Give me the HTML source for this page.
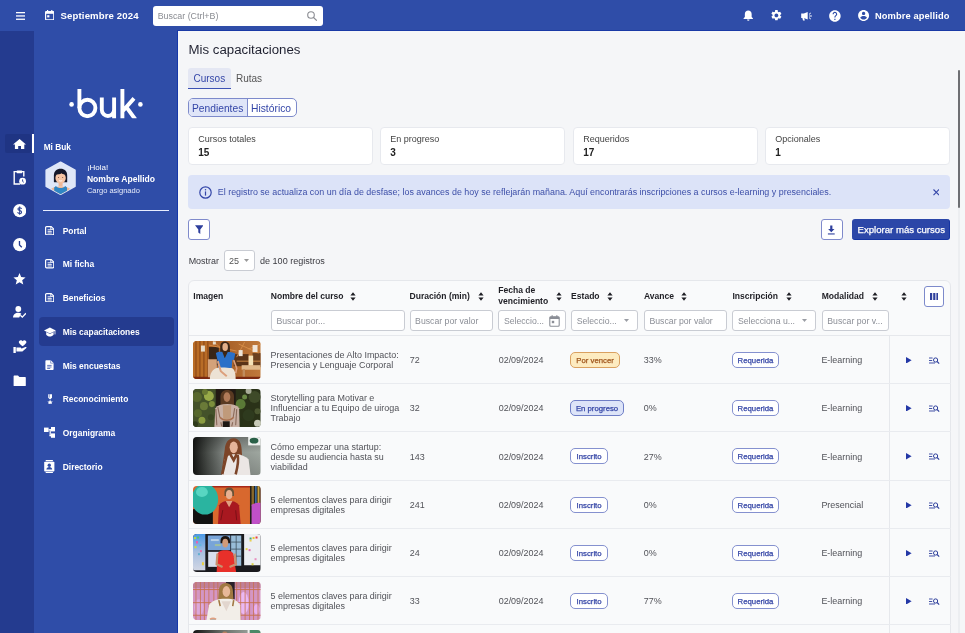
<!DOCTYPE html>
<html><head><meta charset="utf-8">
<style>
*{box-sizing:border-box;margin:0;padding:0}
html,body{width:965px;height:633px;overflow:hidden;background:#f5f6f8;font-family:"Liberation Sans",sans-serif;color:#222}
.a{position:absolute}
.t{position:absolute;white-space:nowrap;line-height:1}
#hdr{left:0;top:0;width:965px;height:31px;background:#2f4da8}
#hdrline{left:177px;top:30px;width:788px;height:1px;background:#1a3aa6}
#rail{left:0;top:31px;width:34px;height:602px;background:#243b8f}
#side{left:34px;top:31px;width:143px;height:602px;background:#2f4da8}
#sideline{left:177px;top:30px;width:1px;height:603px;background:#1537a8}
.wt{color:#fff}
.navi{position:absolute;left:38.8px;width:134.8px;height:29.2px;border-radius:4px}
.navt{position:absolute;left:62.7px;color:#fff;font-weight:700;font-size:8.45px;white-space:nowrap;line-height:1;margin-top:0.6px}
.card{position:absolute;top:127px;height:38px;width:185px;background:#fff;border:1px solid #e7e9ee;border-radius:4px}
.cl{position:absolute;left:9.2px;top:7.4px;font-size:9px;color:#444;white-space:nowrap;line-height:1}
.cv{position:absolute;left:9.2px;top:19.6px;font-size:10px;font-weight:700;color:#222;white-space:nowrap;line-height:1}
.inp{position:absolute;top:310px;height:21px;background:#fff;border:1px solid #c9ccd3;border-radius:3px}
.ph{position:absolute;left:4.6px;top:6px;font-size:8.7px;color:#8b8e96;white-space:nowrap;line-height:1}
.th{position:absolute;font-size:8.55px;font-weight:700;color:#1e1e24;white-space:nowrap;line-height:1}
.sort{position:absolute;width:6px;height:9px}
.rowsep{position:absolute;left:189px;width:761.5px;height:1px;background:#e9ebef}
.td{position:absolute;font-size:8.95px;color:#515258;white-space:nowrap;line-height:10px;margin-top:1px}
.bdg{position:absolute;height:15.8px;border-radius:5px;border:1px solid #8591cf;background:#fff;color:#3445a6;font-size:7.75px;font-weight:400;-webkit-text-stroke:0.25px currentColor;line-height:15.8px;text-align:center;white-space:nowrap}
.thumb{position:absolute;left:193.1px;width:67.5px;height:38.3px;border-radius:4px;overflow:hidden}
</style></head><body><div id="wrap" style="position:absolute;left:0;top:0;width:965px;height:633px;overflow:hidden;will-change:transform">
<div id="hdr" class="a"></div>
<div id="rail" class="a"></div>
<div id="side" class="a"></div>
<div id="sideline" class="a"></div>
<div id="hdrline" class="a"></div>

<!-- header content -->
<svg class="a" style="left:16px;top:12px" width="9" height="8" viewBox="0 0 9 8"><rect x="0" y="0" width="9" height="1.3" fill="#fff"/><rect x="0" y="3.3" width="9" height="1.3" fill="#fff"/><rect x="0" y="6.6" width="9" height="1.3" fill="#fff"/></svg>
<svg class="a" style="left:44.8px;top:9.8px" width="9.4" height="10.4" viewBox="0 0 9.4 10.4"><rect x="0.6" y="1.6" width="8.2" height="8.2" rx="0.8" fill="none" stroke="#fff" stroke-width="1.2"/><rect x="0.6" y="1.6" width="8.2" height="2.2" fill="#fff"/><rect x="2" y="0" width="1.2" height="2.4" fill="#fff"/><rect x="6.2" y="0" width="1.2" height="2.4" fill="#fff"/><rect x="2.2" y="5.2" width="2.2" height="2.2" fill="#fff"/></svg>
<div class="t wt" style="left:60.6px;top:10.7px;font-size:9.6px;font-weight:700;letter-spacing:0.12px">Septiembre 2024</div>
<div class="a" style="left:153px;top:6px;width:170px;height:19.5px;background:#fff;border-radius:3px"></div>
<div class="t" style="left:157.7px;top:12.2px;font-size:8.85px;color:#8a8c92">Buscar (Ctrl+B)</div>
<svg class="a" style="left:306.9px;top:10.7px" width="10.5" height="10" viewBox="0 0 10.5 10"><circle cx="4" cy="4" r="3.3" fill="none" stroke="#8a8c92" stroke-width="1.1"/><line x1="6.4" y1="6.4" x2="9.8" y2="9.6" stroke="#8a8c92" stroke-width="1.2"/></svg>

<!-- header right icons -->
<svg class="a" style="left:742.7px;top:10px" width="10.5" height="11" viewBox="0 0 10.5 11"><path d="M5.25 0.6c-2 0-3.4 1.5-3.4 3.5v2.8L0.6 8.3v0.6h9.3V8.3L8.65 6.9V4.1c0-2-1.4-3.5-3.4-3.5z" fill="#fff"/><path d="M4 9.6h2.5a1.25 1.25 0 0 1-2.5 0z" fill="#fff"/></svg>
<svg class="a" style="left:770.2px;top:9.2px" width="12.8" height="12.8" viewBox="0 0 24 24"><path fill="#fff" d="M19.14 12.94c.04-.3.06-.61.06-.94s-.02-.64-.07-.94l2.03-1.58a.49.49 0 0 0 .12-.61l-1.92-3.32a.49.49 0 0 0-.59-.22l-2.39.96c-.5-.38-1.03-.7-1.62-.94l-.36-2.54A.48.48 0 0 0 13.92 2h-3.84c-.24 0-.43.17-.47.41l-.36 2.54c-.59.24-1.13.57-1.62.94l-2.39-.96a.48.48 0 0 0-.59.22L2.74 8.47c-.12.21-.08.47.12.61l2.03 1.58c-.05.3-.09.63-.09.94s.02.64.07.94l-2.03 1.58a.49.49 0 0 0-.12.61l1.92 3.32c.12.22.37.29.59.22l2.39-.96c.5.38 1.03.7 1.62.94l.36 2.54c.05.24.24.41.48.41h3.84c.24 0 .44-.17.47-.41l.36-2.54c.59-.24 1.13-.56 1.62-.94l2.39.96c.22.08.47 0 .59-.22l1.92-3.32c.12-.22.07-.47-.12-.61l-2.01-1.58zM12 15.6c-1.98 0-3.6-1.62-3.6-3.6s1.62-3.6 3.6-3.6 3.6 1.62 3.6 3.6-1.62 3.6-3.6 3.6z"/></svg>
<svg class="a" style="left:800.7px;top:10px" width="11.5" height="11" viewBox="0 0 11.5 11"><path d="M0.2 3.6h2.6L6.7 2v7.6L2.8 8H0.2z" fill="#fff"/><path d="M1.4 8h1.8l0.6 2.4H2z" fill="#fff"/><path d="M8 4.4L9.8 3M8.1 6h2.8M8 7.6L9.8 9" stroke="#fff" stroke-width="1"/></svg>
<svg class="a" style="left:828.05px;top:8.9px" width="13.8" height="13.8" viewBox="0 0 24 24"><path fill="#fff" d="M12 2C6.48 2 2 6.48 2 12s4.48 10 10 10 10-4.48 10-10S17.52 2 12 2zm1 17h-2v-2h2v2zm2.07-7.75-.9.92C13.45 12.9 13 13.5 13 15h-2v-.5c0-1.1.45-2.1 1.17-2.83l1.24-1.26c.37-.36.59-.86.59-1.41 0-1.1-.9-2-2-2s-2 .9-2 2H8c0-2.21 1.79-4 4-4s4 1.79 4 4c0 .88-.36 1.68-.93 2.25z"/></svg>
<svg class="a" style="left:857.2px;top:9.2px" width="13.2" height="13.2" viewBox="0 0 24 24"><path fill="#fff" d="M12 2C6.48 2 2 6.48 2 12s4.48 10 10 10 10-4.48 10-10S17.52 2 12 2zm0 3c1.66 0 3 1.34 3 3s-1.34 3-3 3-3-1.34-3-3 1.34-3 3-3zm0 14.2c-2.5 0-4.71-1.28-6-3.22.03-1.99 4-3.08 6-3.08 1.99 0 5.97 1.09 6 3.08-1.29 1.94-3.5 3.22-6 3.22z"/></svg>
<div class="t wt" style="left:874.9px;top:11.5px;font-size:9.3px;font-weight:700;letter-spacing:0.12px">Nombre apellido</div>

<!-- rail -->
<div class="a" style="left:5.3px;top:133.8px;width:25.7px;height:18.8px;background:#1f3483;border-radius:2px"></div>
<div class="a" style="left:32px;top:134px;width:1.8px;height:19.3px;background:#fff"></div>
<svg class="a" style="left:12.8px;top:138.7px" width="13.2" height="10.2" viewBox="0 0 13.2 10.2"><path d="M6.6 0L0 5.6h1.9v4.6h3.3V7h2.8v3.2h3.3V5.6h1.9z" fill="#fff"/></svg>
<svg class="a" style="left:12.5px;top:170px" width="13" height="15" viewBox="0 0 13 15"><path d="M4 1.6H1.2v12.4h6" fill="none" stroke="#fff" stroke-width="1.4"/><path d="M9 1.6h1.8v5" fill="none" stroke="#fff" stroke-width="1.4"/><rect x="3.6" y="0.6" width="5.6" height="2.6" rx="0.6" fill="#fff"/><circle cx="9.6" cy="11.2" r="3.4" fill="#fff"/><path d="M9.6 9.4v2l1.2 0.9" fill="none" stroke="#243b8f" stroke-width="0.9"/></svg>
<svg class="a" style="left:12.7px;top:204.2px" width="13.4" height="13.4" viewBox="0 0 24 24"><circle cx="12" cy="12" r="11.8" fill="#fff"/><path d="M15.4 8.8c-.3-1.3-1.5-2.2-3.4-2.2-1.9 0-3.2 1-3.2 2.5 0 3.5 6.6 1.9 6.6 5.5 0 1.6-1.4 2.6-3.4 2.6-2.1 0-3.4-1-3.7-2.5M12 4.6v14.8" fill="none" stroke="#243b8f" stroke-width="1.8"/></svg>
<svg class="a" style="left:12.7px;top:238.3px" width="13.4" height="13.4" viewBox="0 0 24 24"><circle cx="12" cy="12" r="11.8" fill="#fff"/><path d="M11.6 5.5V12.4l4.2 4" fill="none" stroke="#243b8f" stroke-width="2.4"/></svg>
<svg class="a" style="left:13px;top:273px" width="13" height="12.4" viewBox="0 0 24 23"><path d="M12 0l3.1 7.6 8.2.6-6.3 5.3 2 8L12 17.1l-7 4.4 2-8L.7 8.2l8.2-.6z" fill="#fff"/></svg>
<svg class="a" style="left:12.8px;top:306px" width="13.4" height="12" viewBox="0 0 13.4 12"><circle cx="5.3" cy="3" r="2.9" fill="#fff"/><path d="M0 11.6c0-3 2.4-4.8 5.3-4.8 1.2 0 2.2.3 3 .8L6.2 11.6z" fill="#fff"/><path d="M7.4 9.2l1.9 1.9 3.6-3.8" fill="none" stroke="#fff" stroke-width="1.3"/></svg>
<svg class="a" style="left:12.5px;top:339.6px" width="14" height="13.2" viewBox="0 0 14 13.2"><path d="M9.6 1.2c.6-.8 2.3-1.4 3.3-.3 1.2 1.3.2 2.9-3.3 5.4-3.5-2.5-4.5-4.1-3.3-5.4 1-1.1 2.7-.5 3.3.3z" fill="#fff"/><rect x="0.4" y="7" width="2.4" height="6" fill="#fff"/><path d="M3.4 7.4h3.8c.8 0 1.2.6 1.2 1.2H5.6h3.2l3.6-1.6c.8-.3 1.4.4 1 1l-4 3.6H3.4z" fill="#fff"/></svg>
<svg class="a" style="left:12.6px;top:374.5px" width="13.4" height="11" viewBox="0 0 13.4 11"><path d="M0.6 1.2c0-.4.3-.6.6-.6h3.8l1.4 1.5h5.8c.4 0 .6.3.6.6v7.7c0 .4-.3.6-.6.6H1.2c-.4 0-.6-.3-.6-.6z" fill="#fff"/></svg>

<!-- logo -->
<svg class="a" style="left:60px;top:80px" width="90" height="45" viewBox="60 80 90 45">
<defs><clipPath id="lc"><rect x="60" y="80" width="90" height="38.2"/></clipPath></defs>
<circle cx="71.6" cy="104.4" r="2.3" fill="#fff"/>
<circle cx="140.4" cy="104.4" r="2.3" fill="#fff"/>
<g fill="none" stroke="#fff" stroke-width="3.9" clip-path="url(#lc)">
<path d="M79.4 89V108"/>
<ellipse cx="87.4" cy="108" rx="8" ry="8.2"/>
<path d="M101.8 97.4V109.8A6.15 6.15 0 0 0 114.1 109.8M114.1 97.4V119"/>
<path d="M122.4 89V119M122.6 111.2L134 98.4M126.6 107.4L135.4 119.5"/>
</g></svg>

<div class="t wt" style="left:43.7px;top:143.2px;font-size:8.3px;font-weight:700">Mi Buk</div>
<svg class="a" style="left:45px;top:161.3px" width="31.2" height="34.5" viewBox="0 0 31.2 34.5">
<defs><clipPath id="hx"><path d="M15.6 1.2L30 9.3V25.2L15.6 33.3L1.2 25.2V9.3z" stroke-linejoin="round"/></clipPath></defs>
<path d="M15.6 1.2L30 9.3V25.2L15.6 33.3L1.2 25.2V9.3z" fill="#dfe7f8" stroke="#dfe7f8" stroke-width="1.6" stroke-linejoin="round"/>
<g clip-path="url(#hx)">
<path d="M8.9 14.5c0-4.6 2.8-6.8 6.7-6.8s6.6 2.2 6.6 6.8v6.7H8.9z" fill="#14182a"/>
<ellipse cx="15.6" cy="17" rx="5.2" ry="5.8" fill="#f5c4a4"/>
<path d="M9.8 13.6c0.8-3.6 3-4.8 5.8-4.8s5 1.2 5.8 4.8c-1.6 0-3.6-0.4-5-1.4-1.2 1-3.4 1.4-6.6 1.4z" fill="#14182a"/>
<circle cx="13.5" cy="16.4" r="0.5" fill="#6a4a3a"/><circle cx="17.7" cy="16.4" r="0.5" fill="#6a4a3a"/>
<path d="M14 19.4c0.9 0.8 2.3 0.8 3.2 0" stroke="#fff" stroke-width="0.9" fill="none"/>
<rect x="13.6" y="21.5" width="4" height="4" fill="#f0b896"/>
<path d="M3.5 34.5c0-5.4 3-9 12.1-9s12.1 3.6 12.1 9z" fill="#f0b896"/>
<path d="M9.2 34.5V26.5l1.8-1.6c1 1.4 2.6 2.2 4.6 2.2s3.6-0.8 4.6-2.2l1.8 1.6v8z" fill="#2f86c4"/>
</g></svg>
<div class="t wt" style="left:86.9px;top:163.6px;font-size:8px">¡Hola!</div>
<div class="t wt" style="left:86.9px;top:175px;font-size:8.55px;font-weight:700">Nombre Apellido</div>
<div class="t wt" style="left:86.9px;top:186.5px;font-size:7.5px;color:#e6ebfa">Cargo asignado</div>
<div class="a" style="left:43px;top:210px;width:126.4px;height:1.2px;background:#e8edff"></div>

<!-- nav -->
<div class="navi" style="top:317.3px;background:#243b8f"></div>
<svg class="a" style="left:44.9px;top:225.8px" width="9.4" height="9.4" viewBox="0 0 9.4 9.4"><path d="M1.6 0.6h4.6l2.6 2.6v4.6c0 .6-.4 1-1 1H1.6c-.6 0-1-.4-1-1V1.6c0-.6.4-1 1-1z" fill="none" stroke="#fff" stroke-width="1.2"/><path d="M2.6 3.8h3.4M2.6 5.4h4.2M2.6 7h4.2" stroke="#fff" stroke-width="0.9"/><path d="M5.8 0.6v2.8h3" fill="none" stroke="#fff" stroke-width="0.9"/></svg>
<div class="navt" style="top:226.4px">Portal</div>
<svg class="a" style="left:44.9px;top:259.3px" width="9.4" height="9.4" viewBox="0 0 9.4 9.4"><path d="M1.6 0.6h4.6l2.6 2.6v4.6c0 .6-.4 1-1 1H1.6c-.6 0-1-.4-1-1V1.6c0-.6.4-1 1-1z" fill="none" stroke="#fff" stroke-width="1.2"/><path d="M2.6 3.8h3.4M2.6 5.4h4.2M2.6 7h4.2" stroke="#fff" stroke-width="0.9"/><path d="M5.8 0.6v2.8h3" fill="none" stroke="#fff" stroke-width="0.9"/></svg>
<div class="navt" style="top:259.9px">Mi ficha</div>
<svg class="a" style="left:44.9px;top:293.0px" width="9.4" height="9.4" viewBox="0 0 9.4 9.4"><path d="M1.6 0.6h4.6l2.6 2.6v4.6c0 .6-.4 1-1 1H1.6c-.6 0-1-.4-1-1V1.6c0-.6.4-1 1-1z" fill="none" stroke="#fff" stroke-width="1.2"/><path d="M2.6 3.8h3.4M2.6 5.4h4.2M2.6 7h4.2" stroke="#fff" stroke-width="0.9"/><path d="M5.8 0.6v2.8h3" fill="none" stroke="#fff" stroke-width="0.9"/></svg>
<div class="navt" style="top:293.6px">Beneficios</div>
<svg class="a" style="left:43.9px;top:326.5px" width="11.8" height="10" viewBox="0 0 11.8 10"><path d="M5.9 0.6L0 3.6l5.9 3 5.9-3z" fill="#fff"/><path d="M2.2 5v2.8c1 1.2 2.2 1.8 3.7 1.8s2.7-.6 3.7-1.8V5L5.9 6.9z" fill="#fff"/><path d="M11 3.8v3.6" stroke="#fff" stroke-width="0.8"/></svg>
<div class="navt" style="top:327.4px">Mis capacitaciones</div>
<svg class="a" style="left:45.2px;top:360.1px" width="8.8" height="10.2" viewBox="0 0 8.8 10.2"><path d="M1.2 0.2h4.6L8.6 3v6.2c0 .5-.3.8-.8.8H1.2c-.5 0-.8-.3-.8-.8V1c0-.5.3-.8.8-.8z" fill="#fff"/><path d="M2.2 5.4h4.4M2.2 7h4.4M2.2 8.5h3" stroke="#2f4da8" stroke-width="0.75"/><path d="M5.6 0.2v3h3" fill="none" stroke="#2f4da8" stroke-width="0.5"/></svg>
<div class="navt" style="top:361.1px">Mis encuestas</div>
<svg class="a" style="left:46.6px;top:393.8px" width="6.2" height="10.4" viewBox="0 0 6.2 10.4"><path d="M1.2 0.2h3.8v3.6L3.1 5.4 1.2 3.8z" fill="#fff"/><path d="M2.4 0.2v3.4" stroke="#2f4da8" stroke-width="0.5"/><path d="M3.1 5.8l0.9 1.6 1.8.2-1.3 1.2.4 1.7-1.8-.9-1.8.9.4-1.7L.4 7.6l1.8-.2z" fill="#fff"/></svg>
<div class="navt" style="top:394.9px">Reconocimiento</div>
<svg class="a" style="left:43.7px;top:427.1px" width="11.8" height="10.9" viewBox="0 0 11.8 10.9"><rect x="0" y="0.6" width="4.6" height="4.4" fill="#fff"/><rect x="4.6" y="2.2" width="2.4" height="1.2" fill="#fff"/><rect x="5.6" y="2.2" width="1.2" height="7" fill="#fff"/><rect x="7" y="0" width="4.8" height="4.4" fill="#fff"/><rect x="7" y="6.4" width="4.8" height="4.4" fill="#fff"/><rect x="5.6" y="8" width="1.6" height="1.2" fill="#fff"/></svg>
<div class="navt" style="top:428.4px">Organigrama</div>
<svg class="a" style="left:44.2px;top:459.7px" width="10.6" height="13.3" viewBox="0 0 10.6 13.3"><rect x="1.6" y="0" width="7.4" height="1.2" rx="0.4" fill="#fff"/><rect x="1.6" y="12.1" width="7.4" height="1.2" rx="0.4" fill="#fff"/><rect x="0.2" y="1.8" width="10.2" height="9.7" rx="0.8" fill="#fff"/><circle cx="5.3" cy="5.2" r="1.7" fill="#2f4da8"/><path d="M2.4 9.6c0-1.8 1.3-2.7 2.9-2.7s2.9.9 2.9 2.7z" fill="#2f4da8"/></svg>
<div class="navt" style="top:462.2px">Directorio</div>
<!-- title & tabs -->
<div class="t" style="left:188.5px;top:42.8px;font-size:13.26px;color:#1f2130">Mis capacitaciones</div>
<div class="a" style="left:188.2px;top:67.7px;width:42.8px;height:21.3px;background:#e4e7f3;border-radius:3px 3px 0 0"></div>
<div class="a" style="left:188.2px;top:87.6px;width:42.8px;height:1.4px;background:#3d52b4"></div>
<div class="t" style="left:193.5px;top:74.2px;font-size:10px;color:#3446a8">Cursos</div>
<div class="t" style="left:236px;top:74.2px;font-size:10px;color:#555">Rutas</div>
<div class="a" style="left:188.2px;top:98.3px;width:108.4px;height:19.2px;border:1px solid #7d8acb;border-radius:5px;background:#fff;overflow:hidden"><div class="a" style="left:0;top:0;width:58.4px;height:100%;background:#dfe5f8;border-right:1px solid #7d8acb"></div></div>
<div class="t" style="left:192px;top:103.9px;font-size:10.25px;color:#3446a8">Pendientes</div>
<div class="t" style="left:251px;top:103.9px;font-size:10.3px;color:#3446a8">Histórico</div>

<!-- stat cards -->
<div class="card" style="left:188px"><div class="cl">Cursos totales</div><div class="cv">15</div></div>
<div class="card" style="left:380px"><div class="cl">En progreso</div><div class="cv">3</div></div>
<div class="card" style="left:573px"><div class="cl">Requeridos</div><div class="cv">17</div></div>
<div class="card" style="left:765px"><div class="cl">Opcionales</div><div class="cv">1</div></div>

<!-- alert -->
<div class="a" style="left:188.2px;top:175.4px;width:761.8px;height:33.4px;background:#dce3f8;border-radius:4px"></div>
<svg class="a" style="left:198.7px;top:186px" width="13" height="13" viewBox="0 0 13 13"><circle cx="6.5" cy="6.5" r="5.7" fill="none" stroke="#3446a8" stroke-width="1.2"/><rect x="5.9" y="5.4" width="1.2" height="4.2" fill="#3446a8"/><circle cx="6.5" cy="3.7" r="0.75" fill="#3446a8"/></svg>
<div class="t" style="left:217.8px;top:188px;font-size:8.91px;color:#3d4fa8">El registro se actualiza con un día de desfase; los avances de hoy se reflejarán mañana. Aquí encontrarás inscripciones a cursos e-learning y presenciales.</div>
<svg class="a" style="left:932.8px;top:189.3px" width="6.6" height="6.6" viewBox="0 0 6.6 6.6"><path d="M0.5 0.5L6.1 6.1M6.1 0.5L0.5 6.1" stroke="#3446a8" stroke-width="1.1"/></svg>

<!-- toolbar -->
<div class="a" style="left:188.2px;top:219px;width:21.7px;height:21.4px;border:1px solid #7f8acb;border-radius:3px;background:#fff"></div>
<svg class="a" style="left:194.8px;top:225.2px" width="8.6" height="9" viewBox="0 0 8.6 9"><path d="M0 0.3h8.6L5.3 4.4V9L3.3 7.6V4.4z" fill="#2e3f9c"/></svg>
<div class="a" style="left:821px;top:219px;width:21.6px;height:21.4px;border:1px solid #7f8acb;border-radius:3px;background:#fff"></div>
<svg class="a" style="left:827.4px;top:224.8px" width="8.6" height="10" viewBox="0 0 8.6 10"><path d="M3.2 0.5h2.2v3.6h2.1L4.3 7.3 1.1 4.1h2.1z" fill="#2e3f9c"/><rect x="0.9" y="8.4" width="6.8" height="1.1" fill="#2e3f9c"/></svg>
<div class="a" style="left:852px;top:219px;width:98px;height:21px;background:#2c47a8;border-radius:3px;border-right:1px solid #1434a3;border-bottom:1px solid #1434a3"></div>
<div class="t" style="left:857.5px;top:224.8px;font-size:9.6px;color:#fff;-webkit-text-stroke:0.25px #fff">Explorar más cursos</div>

<div class="t" style="left:188.7px;top:256.9px;font-size:8.94px;color:#3a3a40">Mostrar</div>
<div class="a" style="left:224.3px;top:250px;width:30.3px;height:20.6px;border:1px solid #c9ccd3;border-radius:3px;background:#fff"></div>
<div class="t" style="left:229px;top:256.5px;font-size:9px;color:#555">25</div>
<svg class="a" style="left:244px;top:258.8px" width="5" height="3" viewBox="0 0 5 3"><path d="M0 0h5L2.5 3z" fill="#999"/></svg>
<div class="t" style="left:260px;top:256.9px;font-size:9.06px;color:#3a3a40">de 100 registros</div>

<!-- scrollbar -->
<div class="a" style="left:957.5px;top:208px;width:2.5px;height:425px;background:#eceef1"></div>
<div class="a" style="left:957.8px;top:69.8px;width:2.4px;height:138px;background:#6e6f73;border-radius:1.2px"></div>

<!-- TABLE -->
<div class="a" style="left:188.2px;top:280.4px;width:763px;height:400px;background:#f9fafb;border:1px solid #e5e7eb;border-radius:6px"></div>
<div class="a" style="left:189px;top:334.9px;width:761px;height:1px;background:#e6e8ec"></div>
<div class="th" style="left:193.3px;top:291.8px;font-size:8.55px">Imagen</div>
<div class="th" style="left:270.8px;top:291.8px;font-size:8.55px">Nombre del curso</div>
<svg class="sort" style="left:350.4px;top:291.5px" width="6" height="9" viewBox="0 0 6 9"><path d="M3 0.3L5.6 3.6H0.4zM3 8.7L5.6 5.4H0.4z" fill="#1e1e24"/></svg>
<div class="th" style="left:409.5px;top:291.8px;font-size:8.55px">Duración (min)</div>
<svg class="sort" style="left:477.6px;top:291.5px" width="6" height="9" viewBox="0 0 6 9"><path d="M3 0.3L5.6 3.6H0.4zM3 8.7L5.6 5.4H0.4z" fill="#1e1e24"/></svg>
<div class="th" style="left:498.3px;top:286.3px;font-size:8.55px">Fecha de</div>
<div class="th" style="left:498.3px;top:296.5px;font-size:8.55px">vencimiento</div>
<svg class="sort" style="left:556.4px;top:291.5px" width="6" height="9" viewBox="0 0 6 9"><path d="M3 0.3L5.6 3.6H0.4zM3 8.7L5.6 5.4H0.4z" fill="#1e1e24"/></svg>
<div class="th" style="left:571.1px;top:291.8px;font-size:8.55px">Estado</div>
<svg class="sort" style="left:607.0px;top:291.5px" width="6" height="9" viewBox="0 0 6 9"><path d="M3 0.3L5.6 3.6H0.4zM3 8.7L5.6 5.4H0.4z" fill="#1e1e24"/></svg>
<div class="th" style="left:643.9px;top:291.8px;font-size:8.55px">Avance</div>
<svg class="sort" style="left:681.0px;top:291.5px" width="6" height="9" viewBox="0 0 6 9"><path d="M3 0.3L5.6 3.6H0.4zM3 8.7L5.6 5.4H0.4z" fill="#1e1e24"/></svg>
<div class="th" style="left:732.4px;top:291.8px;font-size:8.55px">Inscripción</div>
<svg class="sort" style="left:785.6px;top:291.5px" width="6" height="9" viewBox="0 0 6 9"><path d="M3 0.3L5.6 3.6H0.4zM3 8.7L5.6 5.4H0.4z" fill="#1e1e24"/></svg>
<div class="th" style="left:821.7px;top:291.8px;font-size:8.55px">Modalidad</div>
<svg class="sort" style="left:871.8px;top:291.5px" width="6" height="9" viewBox="0 0 6 9"><path d="M3 0.3L5.6 3.6H0.4zM3 8.7L5.6 5.4H0.4z" fill="#1e1e24"/></svg>
<svg class="sort" style="left:900.6px;top:291.5px" width="6" height="9" viewBox="0 0 6 9"><path d="M3 0.3L5.6 3.6H0.4zM3 8.7L5.6 5.4H0.4z" fill="#1e1e24"/></svg>
<div class="a" style="left:924.2px;top:286.4px;width:20px;height:20.2px;border:1px solid #7d8acb;border-radius:3px;background:#fff"></div>
<svg class="a" style="left:929.8px;top:292.6px" width="8.6" height="7.4" viewBox="0 0 8.6 7.4"><rect x="0" y="0" width="2.2" height="7.4" fill="#2e3f9c"/><rect x="3.2" y="0" width="2.2" height="7.4" fill="#2e3f9c"/><rect x="6.4" y="0" width="2.2" height="7.4" fill="#2e3f9c"/></svg>
<div class="inp" style="left:270.8px;width:133.8px"><div class="ph">Buscar por...</div></div>
<div class="inp" style="left:409.5px;width:83.8px"><div class="ph">Buscar por valor</div></div>
<div class="inp" style="left:498.3px;width:67.9px"><div class="ph">Seleccio...</div><svg class="a" style="left:50.2px;top:3.6px" width="11" height="12" viewBox="0 0 11 12"><rect x="0.8" y="1.8" width="9.4" height="9.4" rx="1" fill="none" stroke="#8b8e96" stroke-width="1.1"/><rect x="0.8" y="1.8" width="9.4" height="2.2" fill="#8b8e96"/><rect x="2.6" y="0.2" width="1.1" height="2.4" fill="#8b8e96"/><rect x="7.3" y="0.2" width="1.1" height="2.4" fill="#8b8e96"/><rect x="2.8" y="5.8" width="2.4" height="2.4" fill="#8b8e96"/></svg></div>
<div class="inp" style="left:571.1px;width:67.2px"><div class="ph">Seleccio...</div><svg class="a" style="left:52.0px;top:7.8px" width="5" height="3" viewBox="0 0 5 3"><path d="M0 0h5L2.5 3z" fill="#9a9da4"/></svg></div>
<div class="inp" style="left:643.9px;width:83.3px"><div class="ph">Buscar por valor</div></div>
<div class="inp" style="left:732.4px;width:84.1px"><div class="ph">Selecciona u...</div><svg class="a" style="left:68.6px;top:7.8px" width="5" height="3" viewBox="0 0 5 3"><path d="M0 0h5L2.5 3z" fill="#9a9da4"/></svg></div>
<div class="inp" style="left:821.7px;width:67.0px"><div class="ph">Buscar por v...</div></div>
<div class="a" style="left:889.3px;top:335.4px;width:1px;height:300px;background:#e6e8ec"></div>
<div class="rowsep" style="top:383px"></div>
<div class="td" style="left:270.5px;top:349.0px">Presentaciones de Alto Impacto:<br>Presencia y Lenguaje Corporal</div>
<div class="td" style="left:409.8px;top:354.0px">72</div>
<div class="td" style="left:498.7px;top:354.0px">02/09/2024</div>
<div class="bdg" style="left:570.4px;top:351.9px;width:49.3px;background:#fdebc0;border-color:#d9a060;color:#a0561c">Por vencer</div>
<div class="td" style="left:643.7px;top:354.0px">33%</div>
<div class="bdg" style="left:732.1px;top:351.9px;width:46.8px">Requerida</div>
<div class="td" style="left:821.4px;top:354.0px">E-learning</div>
<svg class="a" style="left:906px;top:356.7px" width="5.6" height="6.6" viewBox="0 0 5.6 6.6"><path d="M0 0L5.6 3.3L0 6.6z" fill="#2438a6"/></svg>
<svg class="a" style="left:929.4px;top:356.5px" width="10.6" height="7" viewBox="0 0 10.6 7"><path d="M0 1h3.6M0 3.5h3.2M0 6h6" stroke="#2e3f9c" stroke-width="0.9"/><circle cx="6.6" cy="3" r="2.1" fill="none" stroke="#2e3f9c" stroke-width="1"/><path d="M8.1 4.5L10.2 6.6" stroke="#2e3f9c" stroke-width="1.1"/></svg>
<div class="thumb" style="top:340.6px"><svg width="67.5" height="38.3" viewBox="0 0 68 38" preserveAspectRatio="none">
<defs><linearGradient id="g0" x1="0" y1="0" x2="1" y2="0"><stop offset="0" stop-color="#b86a28"/><stop offset="0.5" stop-color="#a86028"/><stop offset="1" stop-color="#c07a3c"/></linearGradient></defs>
<rect width="68" height="38" fill="url(#g0)"/>
<rect x="0" y="0" width="16" height="38" fill="#b86c26"/>
<path d="M3 0v38M7 0v38M11 0v38M15 0v38" stroke="#7a3a12" stroke-width="0.8"/>
<rect x="16" y="6" width="10" height="18" fill="#3a2616"/><rect x="41" y="13" width="15" height="12" fill="#5a3418"/><rect x="60" y="12" width="8" height="14" fill="#6a4020"/>
<path d="M16 4L44 10M20 0L36 14M46 3L66 12M52 1L44 16M56 8L68 3M44 20h24" stroke="#d8904a" stroke-width="0.9"/>
<rect x="8" y="4.5" width="4" height="6" fill="#e8dcc8"/><rect x="20" y="0.5" width="3" height="3" fill="#e8dcc8"/><rect x="46" y="9" width="4" height="6" fill="#ece4d8"/><rect x="60" y="4" width="5" height="7" fill="#f0e6da"/>
<rect x="56" y="14.5" width="4.6" height="10" fill="#f4e2b8"/>
<rect x="49" y="24" width="19" height="4.5" fill="#e0b88a"/><rect x="50" y="28" width="2.4" height="10" fill="#c08c5c"/>
<rect x="0" y="35.5" width="68" height="2.5" fill="#7a2810"/>
<path d="M15 18h9v18h-9z" fill="#d4a27a"/>
<path d="M32 0.5c-3 0-4.6 2.2-4.6 5.6v13h9.8v-13c0-3.4-2-5.6-5.2-5.6z" fill="#3c2616"/>
<ellipse cx="32.4" cy="6" rx="2.8" ry="4" fill="#e2ae88"/>
<path d="M23 12c2-1.6 5-1.6 6.6-1.2L32 17l3-6.2c2 0 5.4 0.4 7.6 1.6l-1.4 6.6-1.6-0.6-0.8 11.2H25.4l-0.6-10z" fill="#2a70c8"/>
<path d="M17 38c0-5 2-10.5 8-11.5 5-0.6 10 0 13.5 0.4 3 0.6 4.5 4 4.5 11.1z" fill="#ece2d4"/>
<path d="M25 20l3 10 6 5" stroke="#dca07c" stroke-width="2" fill="none"/>
<path d="M41 19l3 8-1 5" stroke="#dca07c" stroke-width="1.6" fill="none"/>
</svg></div>
<div class="rowsep" style="top:431px"></div>
<div class="td" style="left:270.5px;top:392.0px">Storytelling para Motivar e<br>Influenciar a tu Equipo de uiroga<br>Trabajo</div>
<div class="td" style="left:409.8px;top:402.0px">32</div>
<div class="td" style="left:498.7px;top:402.0px">02/09/2024</div>
<div class="bdg" style="left:570.4px;top:399.9px;width:53.3px;background:#dde4f8;border-color:#6f7ec6;color:#3445a6">En progreso</div>
<div class="td" style="left:643.7px;top:402.0px">0%</div>
<div class="bdg" style="left:732.1px;top:399.9px;width:46.8px">Requerida</div>
<div class="td" style="left:821.4px;top:402.0px">E-learning</div>
<svg class="a" style="left:906px;top:404.7px" width="5.6" height="6.6" viewBox="0 0 5.6 6.6"><path d="M0 0L5.6 3.3L0 6.6z" fill="#2438a6"/></svg>
<svg class="a" style="left:929.4px;top:404.5px" width="10.6" height="7" viewBox="0 0 10.6 7"><path d="M0 1h3.6M0 3.5h3.2M0 6h6" stroke="#2e3f9c" stroke-width="0.9"/><circle cx="6.6" cy="3" r="2.1" fill="none" stroke="#2e3f9c" stroke-width="1"/><path d="M8.1 4.5L10.2 6.6" stroke="#2e3f9c" stroke-width="1.1"/></svg>
<div class="thumb" style="top:388.6px"><svg width="67.5" height="38.3" viewBox="0 0 68 38" preserveAspectRatio="none">
<rect width="68" height="38" fill="#2a3218"/>
<rect x="0" y="0" width="23" height="38" fill="#44522a"/>
<circle cx="4" cy="8" r="5" fill="#58682e"/><circle cx="16" cy="7" r="5" fill="#98aa48"/><circle cx="12" cy="3" r="3" fill="#6a7a34"/><circle cx="11" cy="17" r="4" fill="#6a7a38"/><circle cx="5" cy="24" r="4" fill="#56682c"/><circle cx="9" cy="31" r="3.5" fill="#8a9c40"/><circle cx="19" cy="15" r="3" fill="#7c8e3c"/><circle cx="2" cy="35" r="3" fill="#2e3a1a"/><circle cx="18" cy="28" r="3" fill="#3a4622"/>
<rect x="23" y="0" width="20" height="38" fill="#221a14"/>
<circle cx="48" cy="15" r="5" fill="#5a7a36"/><circle cx="62" cy="8" r="6" fill="#3e4a28"/><circle cx="56" cy="26" r="6" fill="#2e3a1e"/><circle cx="65" cy="22" r="3" fill="#4a5630"/><circle cx="56" cy="2" r="3" fill="#a8ac98"/><circle cx="65" cy="34" r="3.5" fill="#c8cab8"/><circle cx="46" cy="33" r="4" fill="#283218"/><circle cx="52" cy="8" r="2.5" fill="#6a8a44"/>
<path d="M34.5 1c-4 0-6.8 2.6-6.8 6.5v9h13.6v-9c0-3.9-2.8-6.5-6.8-6.5z" fill="#5a3a22"/>
<ellipse cx="34.2" cy="8" rx="3.4" ry="4.8" fill="#b07a58"/>
<path d="M21.5 38l1-19c2-2.6 6-4 12-4s10 1.4 12 4l0.5 19z" fill="#c8b0a4"/>
<path d="M23 20l1 16M25 18l2 10M44 20l-1 16M42 19l-1.5 9M28 33l1 4M40 33l-1 4" stroke="#8a6a5a" stroke-width="1.1"/>
<path d="M30 16h8.5l-0.6 15h-7.4z" fill="#c09a7a"/>
<path d="M30 32h7v6h-7z" fill="#1e1814"/>
<path d="M27 28c2 2 4 3 7 3s5-1 7-3" stroke="#a87050" stroke-width="1.6" fill="none"/>
</svg></div>
<div class="rowsep" style="top:480px"></div>
<div class="td" style="left:270.5px;top:440.5px">Cómo empezar una startup:<br>desde su audiencia hasta su<br>viabilidad</div>
<div class="td" style="left:409.8px;top:450.5px">143</div>
<div class="td" style="left:498.7px;top:450.5px">02/09/2024</div>
<div class="bdg" style="left:570.4px;top:448.4px;width:37.4px;">Inscrito</div>
<div class="td" style="left:643.7px;top:450.5px">27%</div>
<div class="bdg" style="left:732.1px;top:448.4px;width:46.8px">Requerida</div>
<div class="td" style="left:821.4px;top:450.5px">E-learning</div>
<svg class="a" style="left:906px;top:453.2px" width="5.6" height="6.6" viewBox="0 0 5.6 6.6"><path d="M0 0L5.6 3.3L0 6.6z" fill="#2438a6"/></svg>
<svg class="a" style="left:929.4px;top:453.0px" width="10.6" height="7" viewBox="0 0 10.6 7"><path d="M0 1h3.6M0 3.5h3.2M0 6h6" stroke="#2e3f9c" stroke-width="0.9"/><circle cx="6.6" cy="3" r="2.1" fill="none" stroke="#2e3f9c" stroke-width="1"/><path d="M8.1 4.5L10.2 6.6" stroke="#2e3f9c" stroke-width="1.1"/></svg>
<div class="thumb" style="top:437.1px"><svg width="67.5" height="38.3" viewBox="0 0 68 38" preserveAspectRatio="none">
<defs><linearGradient id="g2" x1="0" y1="0" x2="1" y2="0"><stop offset="0" stop-color="#141614"/><stop offset="0.22" stop-color="#4a4e4a"/><stop offset="0.5" stop-color="#888e8a"/><stop offset="1" stop-color="#9ea69f"/></linearGradient>
<linearGradient id="g2b" x1="0" y1="0" x2="0" y2="1"><stop offset="0" stop-color="#000" stop-opacity="0.25"/><stop offset="0.4" stop-color="#000" stop-opacity="0"/><stop offset="1" stop-color="#000" stop-opacity="0.15"/></linearGradient></defs>
<rect width="68" height="38" fill="url(#g2)"/><rect width="68" height="38" fill="url(#g2b)"/>
<rect x="55.6" y="0" width="12.4" height="8.3" fill="#eef0ee"/><ellipse cx="61.5" cy="3.6" rx="4.4" ry="2.8" fill="#2a6048"/>
<path d="M41 1.2c-6 0-8.4 5-9 11l-3.6 25h6.6l4-16h6l2 16h3.6l-1.6-25c-0.4-6-2.2-11-8-11z" fill="#7c4428"/>
<ellipse cx="41" cy="10.2" rx="4.1" ry="5.8" fill="#e6b49a"/>
<path d="M29 38l3-16c2-3 5-5 8-5h4c4 0 9 2 12 5l2 16z" fill="#ebe6e4"/>
<path d="M34 18l-4.5 19M45 18c1.2 5 0.4 10-2 19M37.5 17l3.5 6 3-6" stroke="#7c4428" stroke-width="2.6" fill="none"/>
</svg></div>
<div class="rowsep" style="top:528px"></div>
<div class="td" style="left:270.5px;top:494.0px">5 elementos claves para dirigir<br>empresas digitales</div>
<div class="td" style="left:409.8px;top:499.0px">241</div>
<div class="td" style="left:498.7px;top:499.0px">02/09/2024</div>
<div class="bdg" style="left:570.4px;top:496.9px;width:37.4px;">Inscrito</div>
<div class="td" style="left:643.7px;top:499.0px">0%</div>
<div class="bdg" style="left:732.1px;top:496.9px;width:46.8px">Requerida</div>
<div class="td" style="left:821.4px;top:499.0px">Presencial</div>
<svg class="a" style="left:906px;top:501.7px" width="5.6" height="6.6" viewBox="0 0 5.6 6.6"><path d="M0 0L5.6 3.3L0 6.6z" fill="#2438a6"/></svg>
<svg class="a" style="left:929.4px;top:501.5px" width="10.6" height="7" viewBox="0 0 10.6 7"><path d="M0 1h3.6M0 3.5h3.2M0 6h6" stroke="#2e3f9c" stroke-width="0.9"/><circle cx="6.6" cy="3" r="2.1" fill="none" stroke="#2e3f9c" stroke-width="1"/><path d="M8.1 4.5L10.2 6.6" stroke="#2e3f9c" stroke-width="1.1"/></svg>
<div class="thumb" style="top:485.6px"><svg width="67.5" height="38.3" viewBox="0 0 68 38" preserveAspectRatio="none">
<rect width="68" height="38" fill="#d8682e"/>
<rect x="19" y="0" width="39" height="1.5" fill="#a82818"/>
<rect x="57.4" y="0" width="10.6" height="38" fill="#24201c"/><rect x="59" y="0" width="2.4" height="20" fill="#8a6a2a"/><rect x="62.4" y="0" width="1.8" height="20" fill="#3a6a9a"/><rect x="65" y="0" width="2" height="18" fill="#c8a03a"/>
<path d="M59 38V18.5c2.5-1.8 6-2.2 9-1.8v21.3z" fill="#c050c8"/>
<rect x="0" y="23" width="20" height="15" fill="#121212"/>
<ellipse cx="12" cy="13.2" rx="13.4" ry="15.2" fill="#2ab4a0"/><ellipse cx="9" cy="6" rx="6" ry="5" fill="#58d6c2"/>
<path d="M36.5 1.4c-3 0-4.8 2.2-4.8 5v3.6h9.6V6.4c0-2.8-1.8-5-4.8-5z" fill="#6a5236"/>
<ellipse cx="36.4" cy="8.5" rx="3.2" ry="4.6" fill="#e8b090"/>
<path d="M25.2 38l1-19c2-3 6-4.4 10-4.4s8 1.4 10.2 4.4l1.6 19z" fill="#a81820"/>
<path d="M33 15l3.4 6 3.4-6" fill="#e0a080"/>
<path d="M30 24l-2 10M43 24l1 10" stroke="#7a1016" stroke-width="1"/>
</svg></div>
<div class="rowsep" style="top:576px"></div>
<div class="td" style="left:270.5px;top:542.0px">5 elementos claves para dirigir<br>empresas digitales</div>
<div class="td" style="left:409.8px;top:547.0px">24</div>
<div class="td" style="left:498.7px;top:547.0px">02/09/2024</div>
<div class="bdg" style="left:570.4px;top:544.9px;width:37.4px;">Inscrito</div>
<div class="td" style="left:643.7px;top:547.0px">0%</div>
<div class="bdg" style="left:732.1px;top:544.9px;width:46.8px">Requerida</div>
<div class="td" style="left:821.4px;top:547.0px">E-learning</div>
<svg class="a" style="left:906px;top:549.7px" width="5.6" height="6.6" viewBox="0 0 5.6 6.6"><path d="M0 0L5.6 3.3L0 6.6z" fill="#2438a6"/></svg>
<svg class="a" style="left:929.4px;top:549.5px" width="10.6" height="7" viewBox="0 0 10.6 7"><path d="M0 1h3.6M0 3.5h3.2M0 6h6" stroke="#2e3f9c" stroke-width="0.9"/><circle cx="6.6" cy="3" r="2.1" fill="none" stroke="#2e3f9c" stroke-width="1"/><path d="M8.1 4.5L10.2 6.6" stroke="#2e3f9c" stroke-width="1.1"/></svg>
<div class="thumb" style="top:533.6px"><svg width="67.5" height="38.3" viewBox="0 0 68 38" preserveAspectRatio="none">
<rect width="68" height="38" fill="#1a1a1e"/>
<defs><linearGradient id="g4" x1="0" y1="0" x2="0" y2="1"><stop offset="0" stop-color="#4a98e4"/><stop offset="0.5" stop-color="#a8c0e0"/><stop offset="1" stop-color="#d0d6e4"/></linearGradient></defs><rect x="0" y="0" width="12.4" height="36" fill="url(#g4)"/>
<rect x="1" y="3" width="2" height="2" fill="#b8d84a"/><rect x="4" y="2.5" width="2" height="2" fill="#50c870"/><rect x="3" y="7" width="2" height="2.4" fill="#e860b0"/><rect x="6.5" y="10" width="2" height="2" fill="#60b8e0"/><rect x="1.5" y="12" width="2" height="2" fill="#c8e040"/><rect x="7" y="16" width="2" height="2" fill="#e870b0"/><rect x="5" y="19" width="2" height="2" fill="#60b0d0"/><rect x="9" y="28" width="2" height="3" fill="#e8d040"/>
<rect x="15" y="1.5" width="22.6" height="14.5" fill="#78a4d8"/><rect x="18" y="5" width="8" height="2" fill="#b8d0e8"/><rect x="22" y="10" width="6" height="2" fill="#a0c0a0"/>
<rect x="15.3" y="17.7" width="15" height="14.9" fill="#d8e0ee"/>
<rect x="38.4" y="1.5" width="10.2" height="30" fill="#98bcd8"/><path d="M43.5 1.5v30M38.4 8h10.2M38.4 15h10.2M38.4 22h10.2" stroke="#40505e" stroke-width="0.8"/>
<rect x="51.5" y="0" width="16.5" height="31" fill="#eceef2"/>
<rect x="63" y="2.5" width="2" height="2" fill="#e84040"/><rect x="60" y="3" width="2" height="2" fill="#e8c830"/><rect x="57" y="3.5" width="2" height="2" fill="#40a080"/><rect x="57" y="5.5" width="2" height="2" fill="#e8d050"/><rect x="53" y="14" width="2" height="2" fill="#e8d050"/><rect x="56" y="15" width="2" height="2" fill="#e870b0"/><rect x="59" y="29" width="2" height="2" fill="#d8d040"/><rect x="62" y="24" width="2" height="2" fill="#e890c0"/>
<path d="M32.5 2c-3 0-4.8 2-4.8 4.6v2.6h9.6V6.6c0-2.6-1.8-4.6-4.8-4.6z" fill="#1c1410"/>
<ellipse cx="32.5" cy="9" rx="3" ry="4.4" fill="#d09a78"/>
<path d="M23.8 38l1-19c2-2.6 4.6-3 7.7-3s5.7 0.4 8 3l3 19z" fill="#e8302a"/>
<path d="M24.6 19.5l-0.8 10.5 6 2.8M42 19.5l1.2 10.5-6.4 2.8" stroke="#c8906e" stroke-width="2.2" fill="none"/>
</svg></div>
<div class="rowsep" style="top:624px"></div>
<div class="td" style="left:270.5px;top:590.0px">5 elementos claves para dirigir<br>empresas digitales</div>
<div class="td" style="left:409.8px;top:595.0px">33</div>
<div class="td" style="left:498.7px;top:595.0px">02/09/2024</div>
<div class="bdg" style="left:570.4px;top:592.9px;width:37.4px;">Inscrito</div>
<div class="td" style="left:643.7px;top:595.0px">77%</div>
<div class="bdg" style="left:732.1px;top:592.9px;width:46.8px">Requerida</div>
<div class="td" style="left:821.4px;top:595.0px">E-learning</div>
<svg class="a" style="left:906px;top:597.7px" width="5.6" height="6.6" viewBox="0 0 5.6 6.6"><path d="M0 0L5.6 3.3L0 6.6z" fill="#2438a6"/></svg>
<svg class="a" style="left:929.4px;top:597.5px" width="10.6" height="7" viewBox="0 0 10.6 7"><path d="M0 1h3.6M0 3.5h3.2M0 6h6" stroke="#2e3f9c" stroke-width="0.9"/><circle cx="6.6" cy="3" r="2.1" fill="none" stroke="#2e3f9c" stroke-width="1"/><path d="M8.1 4.5L10.2 6.6" stroke="#2e3f9c" stroke-width="1.1"/></svg>
<div class="thumb" style="top:581.6px"><svg width="67.5" height="38.3" viewBox="0 0 68 38" preserveAspectRatio="none">
<rect width="68" height="38" fill="#d496c4"/>
<rect x="0" y="0" width="68" height="6" fill="#c08098"/>
<ellipse cx="51" cy="21" rx="5" ry="11" fill="#eab8f4"/>
<ellipse cx="64" cy="27" rx="3" ry="5" fill="#e8b0f0"/>
<ellipse cx="6" cy="25" rx="5" ry="8" fill="#dca8dc"/>
<path d="M3 0v38M7.5 0v38M11.5 0v38M16 0v38M21 0v38M25 0v38M44 0v38M48 0v38M52.5 0v38M57 0v38M61 0v38M65.5 0v38" stroke="#c8704e" stroke-width="0.8"/>
<path d="M0 7.5h68M0 20.5h68M0 33h68" stroke="#c8704e" stroke-width="0.9"/>
<rect x="33.3" y="0" width="8.7" height="17" fill="#2a2028"/>
<path d="M33 1c-4.6 0-7 3.6-7 8l-1.2 15h16.4l-1-15c0-4.4-2.6-8-7.2-8z" fill="#a07842"/>
<ellipse cx="33.6" cy="9.4" rx="3.8" ry="5.4" fill="#e8b898"/>
<path d="M13.5 38l2.6-15c3-4.6 8.6-6.4 16.8-6.4s12 1.8 14.6 6.4l0.5 15z" fill="#f2eee8"/>
<path d="M28.6 19l5 10 4.6-10z" fill="#e2d6ce"/>
<path d="M26 18l1.4 6M41 18l-1 6" stroke="#a07842" stroke-width="1.6"/>
<path d="M17 37c2-1.4 4.4-1.4 6.4 0" stroke="#e0a080" stroke-width="1.4"/>
</svg></div>
<div class="thumb" style="top:629.9px"><svg width="67.5" height="38.3" viewBox="0 0 68 38" preserveAspectRatio="none">
<defs><linearGradient id="g6" x1="0" y1="0" x2="1" y2="0"><stop offset="0" stop-color="#141414"/><stop offset="0.45" stop-color="#6a706a"/><stop offset="0.85" stop-color="#9aa09a"/></linearGradient></defs>
<rect width="68" height="38" fill="url(#g6)"/><rect x="57" y="0" width="11" height="10" fill="#4a8a68"/><rect x="55" y="0" width="2" height="10" fill="#eeeeee"/>
<ellipse cx="32" cy="5" rx="3" ry="3.5" fill="#b88060"/>
</svg></div>
<!-- /TABLE -->
<!-- BODY_PLACEHOLDER -->
</div></body></html>
